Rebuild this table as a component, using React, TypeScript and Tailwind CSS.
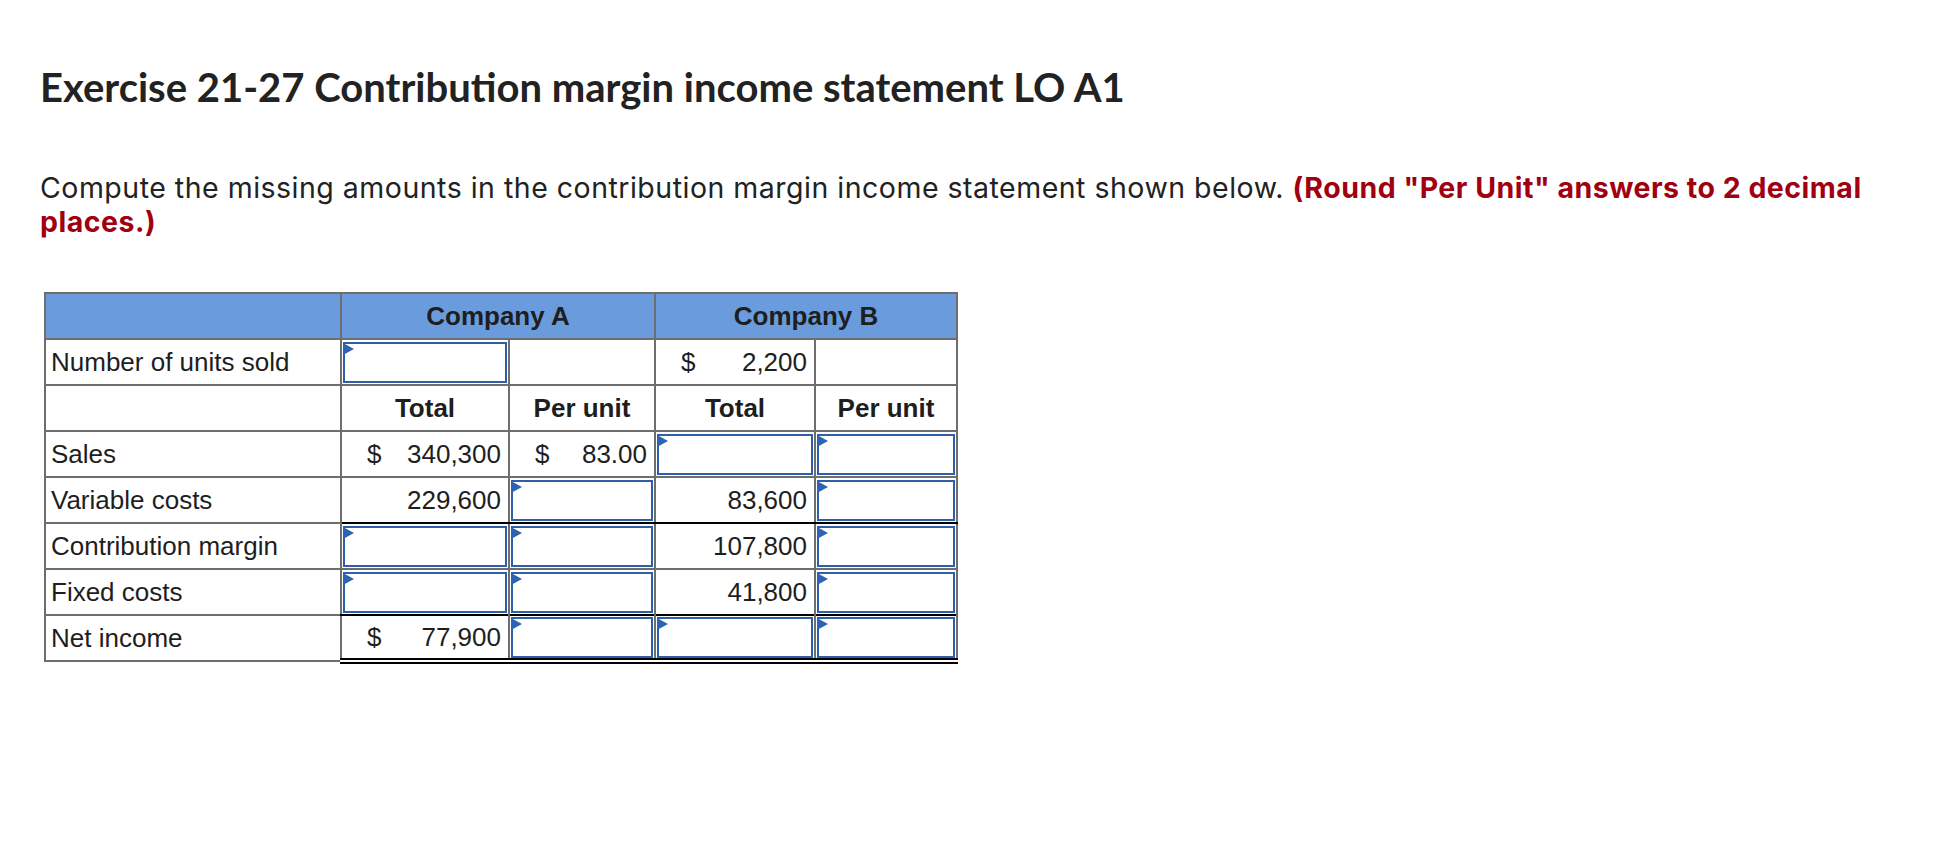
import React from "react";

type Cell =
  | { kind: "input" }
  | { kind: "empty" }
  | { kind: "value"; text: string; dollar?: boolean }
  | { kind: "head"; text: string };

type Row = {
  label: string;
  cells: Cell[];
  topBlack?: boolean;
  bottomBlack?: boolean;
  doubleBottom?: boolean;
};

const input: Cell = { kind: "input" };

const rows: Row[] = [
  {
    label: "Number of units sold",
    cells: [input, { kind: "empty" }, { kind: "value", text: "2,200", dollar: true }, { kind: "empty" }],
  },
  {
    label: "",
    cells: [
      { kind: "head", text: "Total" },
      { kind: "head", text: "Per unit" },
      { kind: "head", text: "Total" },
      { kind: "head", text: "Per unit" },
    ],
  },
  {
    label: "Sales",
    cells: [
      { kind: "value", text: "340,300", dollar: true },
      { kind: "value", text: "83.00", dollar: true },
      input,
      input,
    ],
  },
  {
    label: "Variable costs",
    cells: [{ kind: "value", text: "229,600" }, input, { kind: "value", text: "83,600" }, input],
    bottomBlack: true,
  },
  {
    label: "Contribution margin",
    cells: [input, input, { kind: "value", text: "107,800" }, input],
    topBlack: true,
  },
  {
    label: "Fixed costs",
    cells: [input, input, { kind: "value", text: "41,800" }, input],
    bottomBlack: true,
  },
  {
    label: "Net income",
    cells: [{ kind: "value", text: "77,900", dollar: true }, input, input, input],
    topBlack: true,
    doubleBottom: true,
  },
];

const InputBox = () => (
  <div className="relative mx-[1px] h-[41px] border-2 border-[#2f5fa8] bg-white">
    <span className="absolute -left-[2px] -top-[1px] h-0 w-0 border-y-[6px] border-l-[11px] border-y-transparent border-l-[#2e63b3]" />
  </div>
);

const CellBody = ({ cell }: { cell: Cell }) => {
  if (cell.kind === "input") return <InputBox />;
  if (cell.kind === "empty") return null;
  if (cell.kind === "head") return <div className="text-center font-bold">{cell.text}</div>;
  return (
    <div className="flex items-center justify-between pl-[25px] pr-[7px]">
      <span>{cell.dollar ? "$" : ""}</span>
      <span>{cell.text}</span>
    </div>
  );
};

export default function App() {
  return (
    <div className="min-h-screen bg-white px-10 pt-[63px] text-[#222]">
      <h1 className="font-['Lato',sans-serif] text-[40px] font-bold leading-[48px]">
        Exercise 21-27 Contribution margin income statement LO A1
      </h1>

      <p className="mt-[60px] max-w-[1860px] font-['Inter',sans-serif] text-[28.5px] leading-[34px] tracking-[0.5px]">
        Compute the missing amounts in the contribution margin income statement shown below.{" "}
        <span className="font-bold text-[#a0000f]">(Round "Per Unit" answers to 2 decimal</span>{" "}
        <span className="font-bold text-[#a0000f]">places.)</span>
      </p>

      <table className="ml-[4px] mt-[53px] table-fixed border-collapse font-['Liberation_Sans',Arial,sans-serif] text-[26px] text-[#1e1e1e]">
        <colgroup>
          <col className="w-[296px]" />
          <col className="w-[168px]" />
          <col className="w-[146px]" />
          <col className="w-[160px]" />
          <col className="w-[142px]" />
        </colgroup>
        <thead>
          <tr className="h-[46px] bg-[#6a9bdc]">
            <th className="border-2 border-[#6e6e6e]" />
            <th colSpan={2} className="border-2 border-[#6e6e6e] font-bold">
              Company A
            </th>
            <th colSpan={2} className="border-2 border-[#6e6e6e] font-bold">
              Company B
            </th>
          </tr>
        </thead>
        <tbody>
          {rows.map((row, i) => (
            <tr key={i} className="h-[46px]">
              <td className="border-2 border-[#6e6e6e] pl-[5px]">{row.label}</td>
              {row.cells.map((cell, j) => (
                <td
                  key={j}
                  className={
                    "border-2 border-[#6e6e6e] p-0" +
                    (row.topBlack ? " border-t-black" : "") +
                    (row.bottomBlack ? " border-b-black" : "") +
                    (row.doubleBottom ? " border-b-[6px] border-b-black border-double" : "")
                  }
                >
                  <CellBody cell={cell} />
                </td>
              ))}
            </tr>
          ))}
        </tbody>
      </table>
    </div>
  );
}
